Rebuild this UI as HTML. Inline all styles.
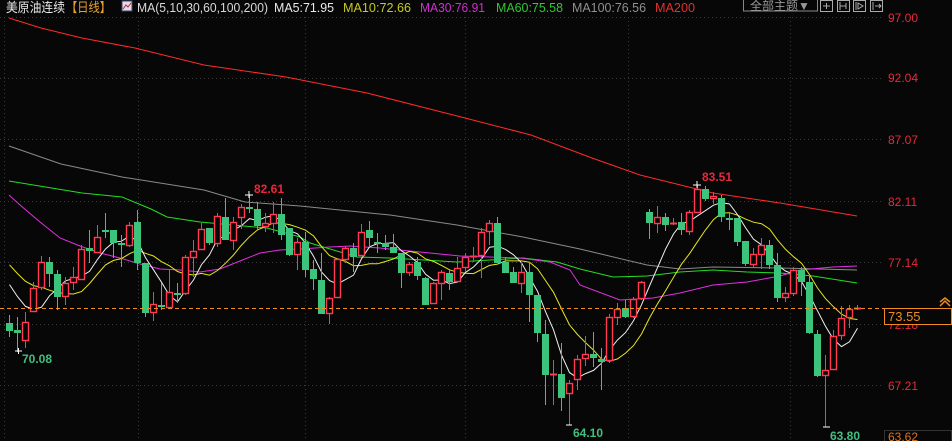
<!DOCTYPE html>
<html><head><meta charset="utf-8"><style>
html,body{margin:0;padding:0;background:#070707;width:952px;height:441px;overflow:hidden}
svg{display:block}
text{font-family:"Liberation Sans","Noto Sans CJK SC",sans-serif}
</style></head><body>
<svg id="s" width="952" height="441" xmlns="http://www.w3.org/2000/svg">
<rect width="952" height="441" fill="#070707"/>
<g stroke="#3a3a3a" stroke-dasharray="1,3" stroke-width="1">
<line x1="0" y1="17.5" x2="882" y2="17.5"/>
<line x1="0" y1="78.5" x2="882" y2="78.5"/>
<line x1="0" y1="139.5" x2="882" y2="139.5"/>
<line x1="0" y1="201.5" x2="882" y2="201.5"/>
<line x1="0" y1="262.5" x2="882" y2="262.5"/>
<line x1="0" y1="324.5" x2="882" y2="324.5"/>
<line x1="0" y1="385.5" x2="882" y2="385.5"/>
<line x1="138.5" y1="17" x2="138.5" y2="441"/>
<line x1="305.5" y1="17" x2="305.5" y2="441"/>
<line x1="465.5" y1="17" x2="465.5" y2="441"/>
<line x1="628.5" y1="17" x2="628.5" y2="441"/>
<line x1="790.5" y1="17" x2="790.5" y2="441"/>
<line x1="4.5" y1="17" x2="4.5" y2="441"/>
</g>
<g id="ma" fill="none" stroke-width="1"></g>
<g id="cd"></g>
<line x1="0" y1="308.5" x2="884" y2="308.5" stroke="#f08c1e" stroke-dasharray="4,3"/>
<!-- header -->
<text x="6" y="12" font-size="13" fill="#e8e8e8" textLength="59" lengthAdjust="spacingAndGlyphs">美原油连续</text>
<text x="66" y="12" font-size="13" fill="#e8a030" textLength="45" lengthAdjust="spacingAndGlyphs">【日线】</text>
<rect x="122" y="1" width="10" height="10" fill="#dde" stroke="#446" stroke-width="1"/>
<polyline points="123,9 126,5 128,7 131,3" fill="none" stroke="#c22" stroke-width="1"/>
<g font-size="13" lengthAdjust="spacingAndGlyphs">
<text x="137" y="12" fill="#d8d8d8" textLength="131" lengthAdjust="spacingAndGlyphs">MA(5,10,30,60,100,200)</text>
<text x="274" y="12" fill="#e8e8e8" textLength="60" lengthAdjust="spacingAndGlyphs">MA5:71.95</text>
<text x="343" y="12" fill="#c8c820" textLength="68" lengthAdjust="spacingAndGlyphs">MA10:72.66</text>
<text x="420" y="12" fill="#d030d0" textLength="65" lengthAdjust="spacingAndGlyphs">MA30:76.91</text>
<text x="496" y="12" fill="#30c830" textLength="67" lengthAdjust="spacingAndGlyphs">MA60:75.58</text>
<text x="572" y="12" fill="#909090" textLength="74" lengthAdjust="spacingAndGlyphs">MA100:76.56</text>
<text x="655" y="12" fill="#e03030" textLength="40" lengthAdjust="spacingAndGlyphs">MA200</text>
</g>
<rect x="743.5" y="-1" width="74" height="12" fill="none" stroke="#888"/>
<text x="750" y="10" font-size="12" fill="#999">全部主题▼</text>
<g fill="none" stroke="#aaa">
<rect x="820.5" y="0.5" width="12" height="11"/><rect x="837.5" y="0.5" width="12" height="11"/>
<rect x="853.5" y="0.5" width="12" height="11"/><rect x="870.5" y="0.5" width="12" height="11"/>
<path d="M823 6h7M826.5 3v6M840 2v8M840 6h6M846 3v6M856 2v8M858 3l5 3-5 3zM873 2v8M875 6h6M879 4l2 2-2 2"/>
</g>
<!-- axis -->
<g font-size="12" fill="#e8283c">
<text x="888" y="22">97.00</text><text x="888" y="82">92.04</text><text x="888" y="144">87.07</text>
<text x="888" y="206">82.11</text><text x="888" y="267">77.14</text><text x="888" y="329">72.18</text>
<text x="888" y="390">67.21</text>
</g>
<rect x="884.5" y="308.5" width="67" height="16" fill="#070707" stroke="#f08c1e"/>
<text x="888" y="321" font-size="13" fill="#f08c1e">73.55</text>
<path d="M940 306l5-5 5 5M940 302l5-4 5 4" fill="none" stroke="#f08c1e" stroke-width="1.5"/>
<rect x="884.5" y="430.5" width="67" height="14" fill="none" stroke="#333"/>
<text x="888" y="441" font-size="12" fill="#e07020">63.62</text>
<!-- labels -->
<g font-size="12" font-weight="bold">
<text x="254" y="193" fill="#e8283c">82.61</text>
<text x="702" y="181" fill="#e8283c">83.51</text>
<text x="22" y="363" fill="#40c080">70.08</text>
<text x="573" y="437" fill="#40c080">64.10</text>
<text x="830" y="440" fill="#40c080">63.80</text>
</g>
<g stroke="#fff"><path d="M15 351h7M18.5 348v6M245 195h8M249 191v7M693 185h8M697 181v7M566 425h6M823 427h7"/></g>
</svg>
<script>
var C=[[0,323,331,315,337],[0,330,333,317,352],[1,322,340,312,348],[1,288,311,282,312],[1,262,287,256,290],[0,262,274,257,287],[0,274,297,270,310],[1,283,296,277,305],[1,277,282,267,290],[1,249,279,245,280],
[0,248,251,230,263],[1,237,252,225,253],[0,230,231,213,238],[0,230,243,230,258],[0,243,244,235,267],[1,225,245,222,247],[0,222,263,210,270],[0,263,313,263,317],[1,304,312,292,321],[0,305,306,283,310],
[1,292,307,269,307],[0,293,294,283,303],[1,257,293,255,295],[1,251,257,240,277],[1,229,249,223,250],[0,228,243,228,245],[1,216,243,213,247],[0,217,240,198,240],[1,222,240,217,250],[1,207,217,204,229],
[0,207,208,195,213],[0,209,226,202,230],[1,223,226,213,232],[1,214,223,202,233],[0,214,235,198,240],[0,228,255,228,256],[1,242,254,238,270],[0,242,270,232,277],[0,269,279,260,290],[0,280,314,253,314],
[1,298,313,297,324],[1,259,297,258,297],[1,248,259,246,263],[0,248,257,243,272],[1,232,255,224,255],[0,230,238,221,247],[0,242,243,233,253],[0,243,247,235,250],[0,247,253,234,253],[0,253,273,253,288],
[1,264,272,262,276],[0,262,276,257,280],[0,278,305,277,305],[1,283,303,282,303],[1,272,283,270,300],[0,273,282,270,290],[1,268,281,257,282],[1,257,267,253,272],[1,256,257,247,262],[1,232,255,228,278],
[1,223,231,220,245],[0,223,263,217,263],[0,262,273,257,273],[0,272,283,267,283],[1,272,283,262,293],[0,272,295,262,322],[0,295,333,295,342],[0,334,375,320,405],[1,374,375,360,405],[0,374,398,343,411],
[1,383,393,380,425],[1,359,379,355,390],[1,354,358,336,366],[0,354,358,332,367],[0,359,362,348,390],[1,317,360,314,363],[1,309,317,303,325],[0,308,317,300,318],[1,299,316,297,318],[1,282,298,281,300],
[0,212,223,209,239],[1,217,223,206,233],[0,217,225,213,231],[1,223,224,218,225],[0,222,230,213,235],[1,212,231,210,235],[1,189,212,185,212],[0,189,199,186,201],[1,196,198,192,204],[0,198,217,195,222],
[0,218,219,213,230],[0,218,242,218,246],[0,241,264,241,266],[1,254,264,248,268],[1,245,254,238,269],[0,245,265,240,269],[0,265,298,253,302],[1,293,297,287,302],[1,270,293,267,296],[0,270,282,267,296],
[0,282,333,275,334],[0,334,376,330,377],[1,370,375,355,427],[1,336,369,330,370],[1,318,335,306,340],[1,309,317,305,328],[1,308,309,305,310]];
var cd=document.getElementById('cd'),h='';
var closes=[];
C.forEach(function(c,i){var x=9+8*i;var up=c[0]==1;closes.push(up?c[1]:c[2]);
 var col=up?'#ff3a52':'#3cc47c';
 if(up){h+='<line x1="'+(x+.5)+'" y1="'+c[3]+'" x2="'+(x+.5)+'" y2="'+c[1]+'" stroke="'+col+'"/>';
  h+='<line x1="'+(x+.5)+'" y1="'+c[2]+'" x2="'+(x+.5)+'" y2="'+c[4]+'" stroke="'+col+'"/>';
  var bh=Math.max(c[2]-c[1],0);
  if(bh<2) h+='<line x1="'+(x-3)+'" y1="'+(c[1]+.5)+'" x2="'+(x+4)+'" y2="'+(c[1]+.5)+'" stroke="'+col+'" stroke-width="2"/>';
  else h+='<rect x="'+(x-2.5)+'" y="'+(c[1]+.5)+'" width="6" height="'+bh+'" fill="#070707" stroke="'+col+'" stroke-width="1.4"/>';
 }else{h+='<line x1="'+(x+.5)+'" y1="'+c[3]+'" x2="'+(x+.5)+'" y2="'+c[4]+'" stroke="'+col+'"/>';
  h+='<rect x="'+(x-3)+'" y="'+c[1]+'" width="7" height="'+Math.max(c[2]-c[1],2)+'" fill="'+col+'"/>';}
});
cd.innerHTML=h;
var pad=[245,245,245,245,245,273,273,273,273],all=pad.concat(closes);
function ma(n){var p=[];for(var i=0;i<closes.length;i++){var s=0;for(var k=0;k<n;k++)s+=all[i+9-k];p.push((9+8*i+.5)+','+(s/n).toFixed(1));}return p.join(' ');}
var g='';
g+='<polyline points="9,18 41,28 82,38 135,48 204,65 286,77 367,93 465,118 531,135 592,158 640,175 713,193 780,203 857,216" stroke="#ff2a2a"/>';
g+='<polyline points="9,146 61,164 122,177 204,190 245,202 300,206 390,215 457,225 523,237 580,249 647,265 680,269 713,267 780,268 857,270" stroke="#8a8a8a"/>';
g+='<polyline points="9,181 82,193 122,197 151,209 167,217 200,222 233,225 267,228 300,237 310,243 357,257 390,258 457,262 523,258 557,262 580,269 613,277 647,276 680,272 713,270 747,272 780,273 813,276 857,283" stroke="#22dd22"/>';
g+='<polyline points="9,195 20,205 40,222 60,238 80,246 100,253 120,258 140,264 160,269 180,270 200,272 220,269 240,261 260,253 280,250 300,249 330,247 350,246 380,248 420,252 460,256 490,257 520,258 550,262 570,270 580,285 620,300 653,298 680,293 713,285 747,282 780,276 800,270 833,267 857,266" stroke="#e030e0"/>';
g+='<polyline points="'+ma(10)+'" stroke="#e6e620"/>';
g+='<polyline points="'+ma(5)+'" stroke="#f0f0f0"/>';
document.getElementById('ma').innerHTML=g;
</script>
</body></html>
